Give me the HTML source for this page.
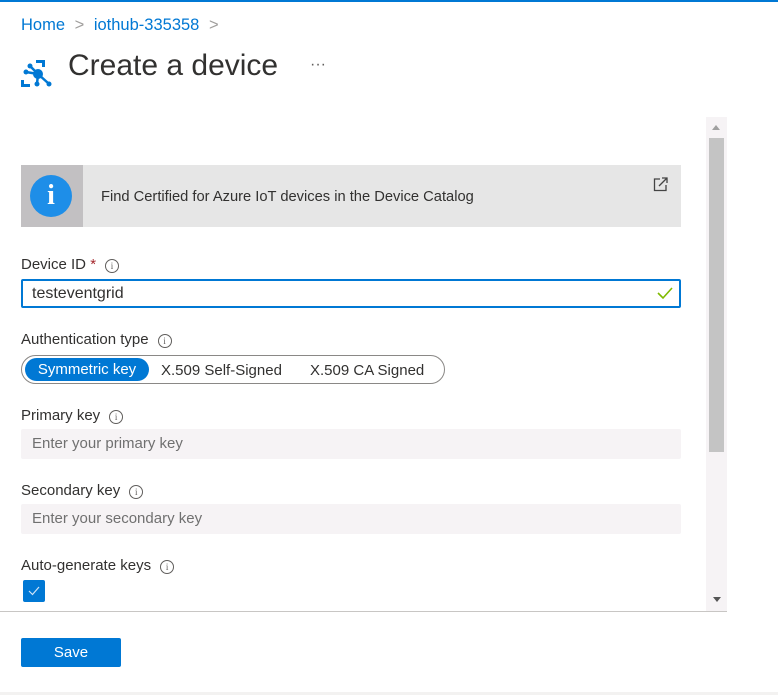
<!DOCTYPE html>
<html><head><meta charset="utf-8"><style>
*{margin:0;padding:0;box-sizing:border-box}
body{width:778px;height:695px;background:#fff;font-family:"Liberation Sans",sans-serif;color:#323130;position:relative;overflow:hidden}
.a{position:absolute}
.lbl{font-size:15px;color:#323130;white-space:nowrap}
.ii{display:inline-block;width:14px;height:14px;border:1px solid #605e5c;border-radius:50%;font-size:9px;line-height:12px;text-align:center;color:#605e5c;vertical-align:0px;margin-left:9px;font-family:"Liberation Serif",serif}
.inp{left:21px;width:660px;height:30px;background:#f6f3f5;border-radius:2px;font-size:15px;color:#707070;padding:6px 11px}
</style></head><body>
<div class="a" style="left:0;top:0;width:778px;height:2px;background:#0078d4"></div>
<div class="a" style="left:21px;top:16px;font-size:16.5px;color:#0078d4">Home <span style="color:#a19f9d;margin:0 5px">&gt;</span> iothub-335358 <span style="color:#a19f9d;margin-left:5px">&gt;</span></div>
<svg class="a" style="left:20px;top:56px" width="36" height="38" viewBox="0 0 36 38">
<path d="M16 4h9v3h-9zM22 4h3v7h-3zM1 24h3v7h-3zM1 28h9v3h-9z" fill="#0078d4"/>
<g stroke="#0078d4" stroke-width="2.5"><line x1="6" y1="16" x2="18" y2="18"/><line x1="18" y1="18" x2="10" y2="10"/><line x1="18" y1="18" x2="17" y2="28"/><line x1="18" y1="18" x2="28" y2="27"/></g>
<circle cx="18" cy="18" r="5" fill="#0078d4"/><circle cx="6" cy="16" r="2.5" fill="#0078d4"/><circle cx="10" cy="10" r="2.5" fill="#0078d4"/><circle cx="17" cy="28" r="2.5" fill="#0078d4"/><circle cx="29" cy="28" r="2.5" fill="#0078d4"/>
</svg>
<div class="a" style="left:68px;top:49px;font-size:30px;color:#323130">Create a device</div>
<div class="a" style="left:310px;top:56px;font-size:16px;color:#605e5c">···</div>
<div class="a" style="left:21px;top:165px;width:660px;height:62px;background:#e6e6e6"></div>
<div class="a" style="left:21px;top:165px;width:62px;height:62px;background:#c2c0c2"></div>
<div class="a" style="left:30px;top:175px;width:42px;height:42px;border-radius:50%;background:#1e8ee8;color:#fff;font-size:28px;font-weight:bold;text-align:center;line-height:42px;font-family:'Liberation Serif',serif">i</div>
<div class="a lbl" style="left:101px;top:189px;font-size:14.7px">Find Certified for Azure IoT devices in the Device Catalog</div>
<svg class="a" style="left:653px;top:176px" width="16" height="16" viewBox="0 0 16 16"><path d="M7 3H1.5v11.5H13V9" fill="none" stroke="#444" stroke-width="1.3"/><path d="M6 10L14 2M9 2h5v5" fill="none" stroke="#444" stroke-width="1.3"/></svg>
<div class="a lbl" style="left:21px;top:256px">Device ID <span style="color:#a4262c">*</span><span class="ii">i</span></div>
<div class="a" style="left:21px;top:279px;width:660px;height:29px;border:2px solid #0078d4;border-radius:2px;font-size:16px;padding:4px 9px;color:#323130">testeventgrid</div>
<svg class="a" style="left:657px;top:286px" width="16" height="14"><path d="M1 7l5 5L15 2" fill="none" stroke="#7fba00" stroke-width="1.6"/></svg>
<div class="a lbl" style="left:21px;top:331px">Authentication type<span class="ii">i</span></div>
<div class="a" style="left:21px;top:355px;width:424px;height:29px;border:1px solid #8a8886;border-radius:15px"></div>
<div class="a" style="left:25px;top:358px;width:124px;height:23px;background:#0078d4;border-radius:12px;color:#fff;font-size:15px;text-align:center;line-height:24px">Symmetric key</div>
<div class="a lbl" style="left:161px;top:362px">X.509 Self-Signed</div>
<div class="a lbl" style="left:310px;top:362px">X.509 CA Signed</div>
<div class="a lbl" style="left:21px;top:407px">Primary key<span class="ii">i</span></div>
<div class="a inp" style="top:429px">Enter your primary key</div>
<div class="a lbl" style="left:21px;top:482px">Secondary key<span class="ii">i</span></div>
<div class="a inp" style="top:504px">Enter your secondary key</div>
<div class="a lbl" style="left:21px;top:557px">Auto-generate keys<span class="ii">i</span></div>
<div class="a" style="left:23px;top:580px;width:22px;height:22px;background:#0078d4;border-radius:2px"></div>
<svg class="a" style="left:26px;top:583px" width="16" height="16"><path d="M3 8l3.5 3.5L13 4" fill="none" stroke="#cfe4f7" stroke-width="1.2"/></svg>
<div class="a" style="left:706px;top:117px;width:21px;height:494px;background:#f6f3f5"></div>
<div class="a" style="left:709px;top:138px;width:15px;height:314px;background:#c4c4c4"></div>
<div class="a" style="left:712px;top:125px;width:0;height:0;border-left:4px solid transparent;border-right:4px solid transparent;border-bottom:5px solid #a0a0a0"></div>
<div class="a" style="left:713px;top:597px;width:0;height:0;border-left:4px solid transparent;border-right:4px solid transparent;border-top:5px solid #555"></div>
<div class="a" style="left:0;top:611px;width:727px;height:1px;background:#c8c6c4"></div>
<div class="a" style="left:21px;top:638px;width:100px;height:29px;background:#0078d4;border-radius:2px;color:#fff;font-size:15px;text-align:center;line-height:30px">Save</div>
<div class="a" style="left:0;top:692px;width:778px;height:3px;background:#f3f2f1"></div>
</body></html>
